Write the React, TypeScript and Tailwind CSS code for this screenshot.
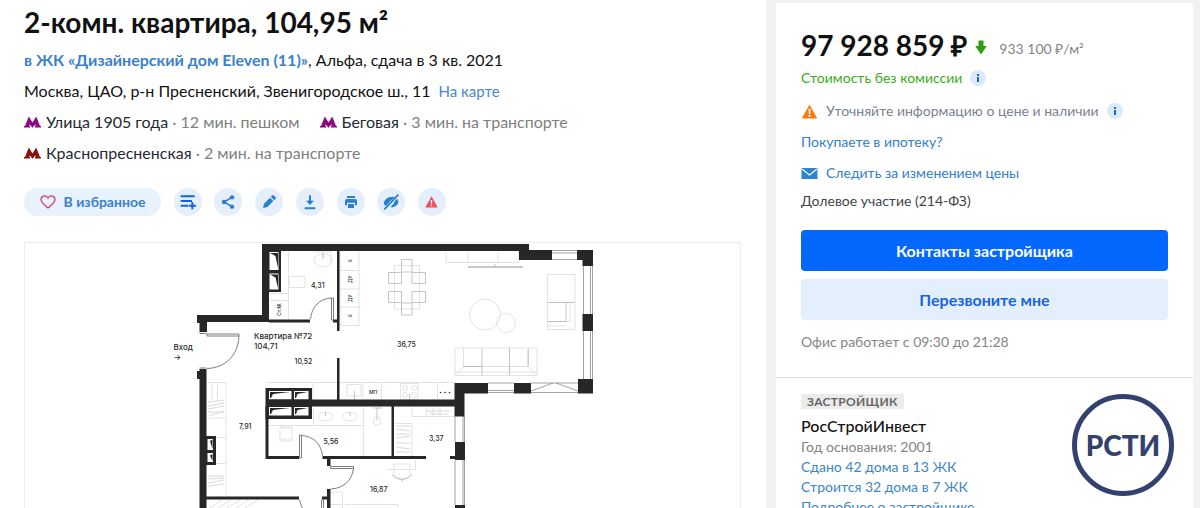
import type { ReactNode } from 'react';

interface MetroProps {
  name: string;
  time: string;
  line: 'purple' | 'maroon';
}

function Metro({ name, time, line }: MetroProps) {
  return (
    <div className="flex items-center text-base leading-[31px]">
      <svg
        viewBox="0 0 17 12"
        className={`mr-[5px] h-3 w-[17px] ${line === 'purple' ? 'text-[#8b0a82]' : 'text-[#86110f]'}`}
        fill="currentColor"
      >
        <path d="M0 11.500V10H1L4.800 .5 8.500 6.500 12.200 .5 16 10H17V11.500H11V10H11.800L11.300 8.600 8.500 11.800 5.700 8.600 5.200 10H6V11.500Z" />
      </svg>
      <span className="text-[#1f2a36]">{name}</span>
      <span className="whitespace-pre text-[#808080]"> · {time}</span>
    </div>
  );
}

function RoundButton({ label, children }: { label: string; children: ReactNode }) {
  return (
    <button aria-label={label} className="flex size-7 items-center justify-center rounded-full bg-[#e5effc] text-[#2b7fd0]">
      <svg viewBox="0 0 24 24" className="size-4" fill="currentColor">
        {children}
      </svg>
    </button>
  );
}

function Info() {
  return (
    <button aria-label="Подробнее" className="ml-2 flex size-4 items-center justify-center rounded-full bg-[#dbeafb] text-[#1566d6]">
      <svg viewBox="0 0 16 16" className="size-4" fill="currentColor">
        <path d="M7 4h2v2H7zM7 7h2v5H7z" />
      </svg>
    </button>
  );
}

function Warning({ className }: { className: string }) {
  return (
    <svg viewBox="0 0 16 15" className={className}>
      <path d="M8 .4 15.800 14.500H.2Z" fill="currentColor" strokeLinejoin="round" />
      <path d="M7 5h2l-.3 5H7.300zM7.100 11h1.800v1.800H7.100z" fill="#fff" />
    </svg>
  );
}

function FloorPlan() {
  return (
    <svg viewBox="170 243 425 330" className="mx-auto block w-[425px] max-w-full" fill="none">
      {/* Furniture */}
      <g stroke="#dcdcdc" strokeWidth=".8">
        <path d="M288.500 252V319M269 293.500H288M269 300.500H288M289 276.500H305V287.500H289ZM314.500 252H331V263" />
        <ellipse cx="323" cy="260.500" rx="9" ry="6.500" />
        <path d="M323 253v6" stroke="#aaa" />
        <path d="M340 252V325.500H359V252M340 270.500H359M340 289H359M340 307H359" />
        <path d="M446 252V262.500H519V251M468 252V262.500M498 252V262.500" />
        <path d="M547.500 274.500H575V329.500H547.500ZM547.500 321.500H570V303M547.500 326H566" />
        <circle cx="485" cy="314.500" r="15.500" />
        <circle cx="506" cy="323" r="9.500" />
        <path d="M394.500 265.500H419.500V309H394.500Z" />
        <path d="M455 348H537V375.500H455ZM463.500 348V366.500H528.500V348M463.500 366.500L455 375.500M528.500 366.500L537 375.500M455 372H537" />
        <path d="M207 382.500H226V496M208 418H226M208 437.500H226M208 463.500H226M217.500 383V400M212 383V400" />
        <path d="M266 382.500H337M313 382.500V399M347 384.500H361V396H347ZM339 382.500H455M363 383V399M381.500 383V399M400.500 383.500H418V399.500H400.500ZM437.500 383V399" />
        <circle cx="405" cy="388" r="2.500" />
        <circle cx="414" cy="388" r="2.500" />
        <circle cx="405" cy="395" r="2.500" />
        <circle cx="414" cy="395" r="2.500" />
        <path d="M269 425.500H363.500M313.500 407V425.500M363.500 407V456M280 427H292V438Q286 442 280 438ZM280 438V441H292V438M282 425V428H290" />
        <ellipse cx="325.500" cy="416.500" rx="7.500" ry="4.500" />
        <ellipse cx="350" cy="416.500" rx="7.500" ry="4.500" />
        <circle cx="377" cy="421" r="4" />
        <path d="M395 423.500H412V456M412 407V416.500H454M426.500 408V416M433 408V416M440 408V416" />
        <path d="M415.500 460V469.500H386.500M394 464H410V476Q402 482 394 476ZM330 492H342.500V508M345 504.500H398V520M330 504.500H342" />
        <path d="M209 508L222 500M218 508L231 500M227 508L240 500M236 508L249 500M245 508L258 500" />
      </g>
      {/* Wardrobe hangers */}
      <path
        d="M208 402L224 400M208 406L224 403M208 409L224 406M208 412H224M209 416L224 411M208 476H224M208 479L224 478M208 483L224 480M208 486L224 484M396 426H410M396 429L410 431M396 434H410M396 438L410 436M396 443H410M396 447L410 449M396 452H410M427 411H450M430 414H448"
        stroke="#cfcfcf"
        strokeWidth=".8"
      />
      {/* Dining table and seat outlines */}
      <g stroke="#b5b5b5" strokeWidth=".8">
        <path d="M401.500 259.500H412V272H401.500ZM401.500 303H412V315H401.500ZM388.500 272.500H401.500V283.500H388.500ZM388.500 291.500H401.500V302.500H388.500ZM412 272.500H425.500V283.500H412ZM412 291.500H425.500V302.500H412Z" />
        <path d="M547.500 302.500H575M566 302.500V321M547.500 321.500H566M482 348V375M509.500 348V375M528 349V366M463 366.500H482M392 475Q402 484 412 475M402 479V482M354.500 399.500V391M325.500 412v4M350 412v4M377 421V408M373 408H382M409.500 399V394" />
        <path d="M468 267H523" strokeWidth="1.400" />
        <path d="M495 264V267" />
      </g>
      {/* Windows */}
      <path
        d="M552 250.500H577M552 253H577M552 259.500H577M583.500 266V314M590.500 266V314M592.500 266V314M583.500 331V379M590.500 331V379M592.500 331V379M488 383H514M488 390.500H514M488 392.500H514M531 383H578M531 392.500H578M531 391L553 383M556 383L578 391M455 416V442M463 416V442M464.500 416V442M455 460V505M463 460V505M464.500 460V505"
        stroke="#8b8b8b"
        strokeWidth=".8"
      />
      {/* Walls */}
      <path
        d="M262 244H529V250H552V260H519V251H269V322H207V332H199.500V323H197V315H262ZM269 319.500H310V322.500H269ZM333 319.500H337V251H339.500V331H337V322.500H333ZM337 358H339.500V400H337ZM199.500 369H206.500V520H199.500V379H197V371H199.500ZM266 399.500H454.500V383H488V393.500H464.500V416.500H454.500V406.500H266ZM514 383H531V393.500H514ZM578 379H593V393.500H578ZM577 250H593V266H582.500V260H577ZM582.500 314H593V331H582.500ZM455 442H465V460H455ZM455 505H465V520H455ZM265.500 406H268.500V456H299V459H265.500ZM322.500 456H391.500V406H394V456H426V459H330.500V466H327V459H322.500ZM450 456H456V459H450ZM327 489H330.500V520H327ZM206 496.500H299V499.500H206ZM322 496.500H328V499.500H322Z"
        fill="#272727"
      />
      {/* Ventilation shafts */}
      <path
        d="M269 251H281V292H269ZM265.500 388H312V419H265.500ZM206 436H216V465H206Z"
        fill="#272727"
      />
      <path
        d="M269.500 252H278.500V270H269.500ZM269.500 273.500H278.500V289.500H269.500ZM269 391H291.500V399.500H269ZM294 391H308.500V399.500H294ZM269 407H291.500V415.500H269ZM294 407H308.500V415.500H294ZM207.500 439H213V450H207.500ZM207.500 453H213V462H207.500Z"
        fill="#fff"
      />
      <path
        d="M270 253H278V268L275.500 256ZM270 274.500H278V288L275.500 277.500ZM270 392H290L273 394 271 398H270ZM295 392H307.500L297.500 394 296 398H295ZM270 408H290L273 410 271 414H270ZM295 408H307.500L297.500 410 296 414H295ZM212.500 439.500V449L210 441ZM212.500 454V461L210 455.500ZM266 399.500H312V407H266Z"
        fill="#272727"
      />
      {/* Doors */}
      <g stroke="#6f6f6f" strokeWidth=".9">
        <path d="M207 334H239V336H207ZM239 336C238 356 225 368 207 368.500M199.500 333.500H206.500M199.500 368H206.500" />
        <path d="M331.500 298H333.500V320H331.500ZM331.500 298C320 298 311.500 307 310.500 319" />
        <path d="M299.500 435H301.500V458H299.500ZM301.500 435.500C313 436 321.500 444 322.500 456" />
        <path d="M330.500 466.500H353.500V468.500H330.500ZM353.500 468.500C352 481 343 488.500 330.500 489" />
        <path d="M321.500 500H323.500V520H321.500ZM299.500 499.500Q301 508 307 514" />
      </g>
      <g fill="#2a2a2a" className="font-[Inter,sans-serif] text-[7px] font-medium">
        <text x="173.500" y="350" className="text-[8px]">Вход</text>
        <text x="173.500" y="360" className="text-[8px]">→</text>
        <text x="254" y="339" className="text-[8px]">Квартира №72</text>
        <text x="254" y="349" className="text-[8px]">104,71</text>
        <text x="311" y="287.500">4,31</text>
        <text x="294.500" y="364">10,52</text>
        <text x="239" y="429">7,91</text>
        <text x="397" y="347">36,75</text>
        <text x="323.500" y="443.500">5,56</text>
        <text x="429" y="441">3,37</text>
        <text x="370" y="491.500">16,87</text>
        <text x="369" y="394" className="text-[5px]">МП</text>
        <text transform="translate(281 316) rotate(-90)" className="text-[5px]">Ст.М.</text>
        <text transform="translate(351.500 262.500) rotate(-90)" className="text-[5px]">Х</text>
        <text transform="translate(351.500 283) rotate(-90)" className="text-[5px]">ДУ</text>
        <text transform="translate(351.500 302) rotate(-90)" className="text-[5px]">ДУ</text>
        <text transform="translate(351.500 317.500) rotate(-90)" className="text-[5px]">Х</text>
        <circle cx="440.500" cy="392.500" r=".8" />
        <circle cx="445" cy="392.500" r=".8" />
        <circle cx="449.500" cy="392.500" r=".8" />
      </g>
    </svg>
  );
}

export default function App() {
  return (
    <div className="flex h-screen gap-[10px] overflow-hidden bg-[#f2f2f2] pr-[7px] font-[Lato,sans-serif] text-[#111]">
      <main className="min-w-0 flex-1 bg-white px-6">
        <h1 className="pt-1 text-[28px] leading-9 font-bold">2-комн. квартира, 104,95 м²</h1>

        <p className="mt-1 text-base leading-8">
          <a href="#complex" className="font-bold text-[#3b80cd]">в ЖК «Дизайнерский дом Eleven (11)»</a>, Альфа, сдача в 3 кв. 2021
        </p>
        <p className="text-base leading-[30px]">
          Москва, ЦАО, р-н Пресненский, Звенигородское ш., 11
          <a href="#map" className="ml-2 text-[15px] text-[#4a87cb]">На карте</a>
        </p>
        <div className="flex flex-wrap gap-x-5">
          <Metro name="Улица 1905 года" time="12 мин. пешком" line="purple" />
          <Metro name="Беговая" time="3 мин. на транспорте" line="purple" />
        </div>
        <Metro name="Краснопресненская" time="2 мин. на транспорте" line="maroon" />

        {/* Actions */}
        <div className="mt-5 flex w-[422px] max-w-full justify-between">
          <button className="flex h-7 w-[137px] items-center justify-center gap-2 rounded-full bg-[#e8f2fc] text-sm font-bold text-[#3b80c8]">
            <svg viewBox="0 0 16 14" className="h-[14px] w-4" fill="none" stroke="#dc3d68" strokeWidth="1.300">
              <path d="M8 13C3 9 1 7 1 4.400C1 .8 5.800-.4 8 3C10.200-.4 15 .8 15 4.400C15 7 13 9 8 13Z" />
            </svg>
            В избранное
          </button>
          <RoundButton label="Добавить в список">
            <path d="M1 2H22V5H1ZM1 9H18V12H1ZM1 16H12V19H1ZM17 12H20V16H24V19H20V23H17V19H13V16H17Z" fill="#1762dc" />
          </RoundButton>
          <RoundButton label="Поделиться">
            <circle cx="6" cy="12" r="3.300" />
            <circle cx="18" cy="5" r="3.300" />
            <circle cx="18" cy="19" r="3.300" />
            <path d="M18 5L6 12 18 19" fill="none" stroke="currentColor" strokeWidth="2.400" />
          </RoundButton>
          <RoundButton label="Заметка">
            <path d="M3 21L4.500 14.500 13.500 5.500 18.500 10.500 9.500 19.500ZM14.800 4.200L17 2Q18 1.200 19 2L22 5Q22.800 6 22 7L19.800 9.200Z" />
          </RoundButton>
          <RoundButton label="Скачать">
            <path d="M10.500 2H13.500V10H18L12 16.500 6 10H10.500ZM4 20H20V23H4Z" />
          </RoundButton>
          <RoundButton label="Распечатать">
            <path d="M6 3H18V6H6ZM6 7.500H18Q21 7.500 21 10.500V17H18V13H6V17H3V10.500Q3 7.500 6 7.500ZM7.500 15H16.500V21H7.500Z" />
          </RoundButton>
          <RoundButton label="Скрыть">
            <path d="M1 13Q4 4 14 4L18 4.500 11 10.500Q9 12 8.500 14L4 18Q1 16 1 13ZM21 7Q24 11 23 13 20 20 11 20L14.500 16Q17 14 17.500 11Z" />
            <path d="M2 23L23 1" stroke="currentColor" strokeWidth="2.600" />
          </RoundButton>
          <button aria-label="Пожаловаться" className="flex size-7 items-center justify-center rounded-full bg-[#e5effc]">
            <Warning className="h-3 w-[13px] text-[#f14d59]" />
          </button>
        </div>

        {/* Plan */}
        <div className="mt-[26px] mr-[1px] border border-[#ececec]">
          <FloorPlan />
        </div>
      </main>

      <aside className="mt-[3px] w-[417px] shrink-0 bg-white">
        <section className="border-b border-[#e2e2e2] px-[25px] pt-6 pb-[25px] text-sm">
          <div className="flex h-9 items-center">
            <strong className="text-[28px] leading-9 font-bold">97 928 859 ₽</strong>
            <svg viewBox="0 0 12 15" className="mt-1 ml-2 h-[15px] w-3" fill="#2aa10c">
              <path d="M3.500 .5H8.500V6H11.800L6 14.500.2 6H3.500Z" />
            </svg>
            <span className="mt-2 ml-3 text-[#858585]">933 100 ₽/м²</span>
          </div>
          <div className="flex h-[30px] items-center text-[#3aad16]">
            Стоимость без комиссии
            <Info />
          </div>
          <div className="flex h-9 items-center text-[#7c828c]">
            <Warning className="mr-2 h-[15px] w-[17px] text-[#f97b16]" />
            Уточняйте информацию о цене и наличии
            <Info />
          </div>
          <a href="#mortgage" className="block leading-[26px] text-[#3180cc]">Покупаете в ипотеку?</a>
          <a href="#watch" className="flex h-9 items-center text-[#3180cc]">
            <svg viewBox="0 0 16 11" className="mr-2 h-[11px] w-[17px]">
              <path d="M0 0H16V11H0Z" fill="#2d82d2" />
              <path d="M.5 1L8 7 15.500 1" fill="none" stroke="#fff" strokeWidth="1.200" />
            </svg>
            Следить за изменением цены
          </a>
          <p className="leading-5 text-[#3f454c]">Долевое участие (214-ФЗ)</p>
          <button className="mt-[19px] block h-[41px] w-full rounded bg-[#0468ff] text-base font-bold text-white">
            Контакты застройщика
          </button>
          <button className="mt-2 block h-[41px] w-full rounded bg-[#e4effd] text-base font-bold text-[#1764dd]">
            Перезвоните мне
          </button>
          <p className="mt-3 leading-5 text-[#858585]">Офис работает с 09:30 до 21:28</p>
        </section>

        <section className="flex items-start justify-between pt-4 pr-[19px] pl-[25px] text-sm leading-5">
          <div>
            <span className="block w-fit bg-[#ececec] px-[6px] text-xs leading-[15px] font-bold tracking-wide text-[#666]">
              ЗАСТРОЙЩИК
            </span>
            <h2 className="mt-[6px] text-base leading-[22px] font-medium text-[#111]">РосСтройИнвест</h2>
            <p className="text-[#858585]">Год основания: 2001</p>
            <a href="#done" className="block text-[#3b85c8]">Сдано 42 дома в 13 ЖК</a>
            <a href="#building" className="block text-[#3b85c8]">Строится 32 дома в 7 ЖК</a>
            <a href="#developer" className="block text-[#3b85c8]">Подробнее о застройщике</a>
          </div>
          <div className="flex size-[102px] items-center justify-center rounded-full border-[5px] border-[#33416f] text-[28px] font-black text-[#33416f]">
            РСТИ
          </div>
        </section>
      </aside>
    </div>
  );
}
